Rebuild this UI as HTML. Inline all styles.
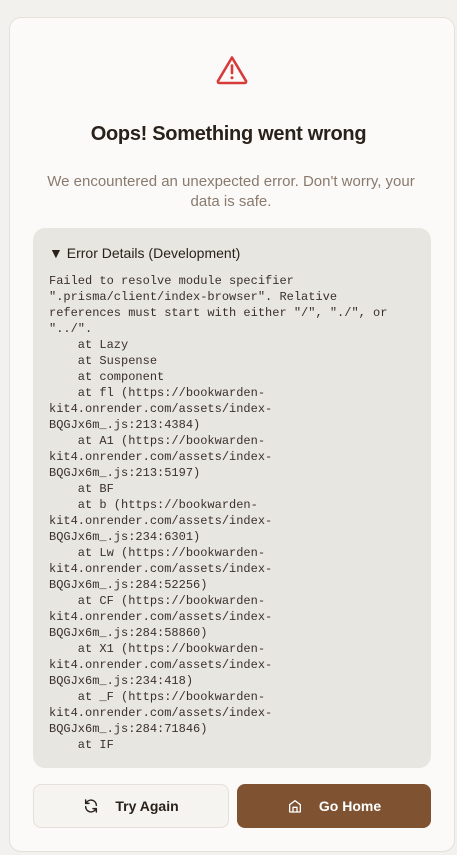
<!DOCTYPE html>
<html><head><meta charset="utf-8"><style>
*{box-sizing:border-box;margin:0;padding:0}
body{width:457px;height:855px;background:#f3f1ed;font-family:"Liberation Sans",sans-serif;position:relative;overflow:hidden}
.card{position:absolute;left:9px;top:17px;width:446px;height:835px;background:#fbfaf8;border:1px solid #e4e0da;border-radius:12px}
.icon{position:absolute;left:216px;top:55px}
h1{position:absolute;left:0;width:100%;top:123px;text-align:center;font-size:20px;font-weight:bold;color:#2a211b;letter-spacing:-0.3px}
.sub{position:absolute;left:40px;width:382px;top:172px;text-align:center;font-size:15px;line-height:20px;color:#8a7a6e}
.box{position:absolute;left:33px;top:228px;width:398px;height:540px;background:#e8e6e1;border-radius:12px}
.sum{position:absolute;left:16px;top:17px;font-size:14px;color:#2a211b}
pre{position:absolute;left:16px;top:45px;font-family:"Liberation Mono",monospace;font-size:12px;line-height:16px;color:#3a302a;white-space:pre}
.btn{position:absolute;top:784px;height:44px;border-radius:8px;font-size:14px;font-weight:bold;display:flex;align-items:center;justify-content:center;gap:16px}
.b1{left:33px;width:196px;background:#f6f4f0;border:1px solid #e4e0da;color:#2a211b}
.b2{left:237px;width:194px;background:#7f5232;color:#fff}
</style></head><body>
<div class="card"></div>
<svg class="icon" width="32" height="30" viewBox="0 0 32 30"><path d="M16 2.5 L30 26 Q30.5 28 28.5 28 L3.5 28 Q1.5 28 2 26 Z" fill="none" stroke="#d63a3a" stroke-width="2.6" stroke-linejoin="round"/><line x1="16" y1="10.5" x2="16" y2="18" stroke="#d63a3a" stroke-width="2.6" stroke-linecap="round"/><circle cx="16" cy="22.8" r="1.5" fill="#d63a3a"/></svg>
<h1>Oops! Something went wrong</h1>
<div class="sub">We encountered an unexpected error. Don't worry, your data is safe.</div>
<div class="box">
<div class="sum">▼ Error Details (Development)</div>
<pre>Failed to resolve module specifier
".prisma/client/index-browser". Relative
references must start with either "/", "./", or
"../".
    at Lazy
    at Suspense
    at component
    at fl (https://bookwarden-
kit4.onrender.com/assets/index-
BQGJx6m_.js:213:4384)
    at A1 (https://bookwarden-
kit4.onrender.com/assets/index-
BQGJx6m_.js:213:5197)
    at BF
    at b (https://bookwarden-
kit4.onrender.com/assets/index-
BQGJx6m_.js:234:6301)
    at Lw (https://bookwarden-
kit4.onrender.com/assets/index-
BQGJx6m_.js:284:52256)
    at CF (https://bookwarden-
kit4.onrender.com/assets/index-
BQGJx6m_.js:284:58860)
    at X1 (https://bookwarden-
kit4.onrender.com/assets/index-
BQGJx6m_.js:234:418)
    at _F (https://bookwarden-
kit4.onrender.com/assets/index-
BQGJx6m_.js:284:71846)
    at IF</pre>
</div>
<div class="btn b1"><svg width="16" height="16" viewBox="0 0 24 24" fill="none" stroke="#2a211b" stroke-width="2.2" stroke-linecap="round" stroke-linejoin="round"><path d="M20 11a8 8 0 0 0-14.5-4.5L4 8"/><path d="M4 3v5h5"/><path d="M4 13a8 8 0 0 0 14.5 4.5L20 16"/><path d="M20 21v-5h-5"/></svg><span>Try Again</span></div>
<div class="btn b2"><svg width="16" height="16" viewBox="0 0 24 24" fill="none" stroke="#fff" stroke-width="2" stroke-linecap="round" stroke-linejoin="round"><path d="M4 10l8-6 8 6v10a1 1 0 0 1-1 1H5a1 1 0 0 1-1-1z"/><path d="M9 21v-7h6v7"/></svg><span>Go Home</span></div>
</body></html>
